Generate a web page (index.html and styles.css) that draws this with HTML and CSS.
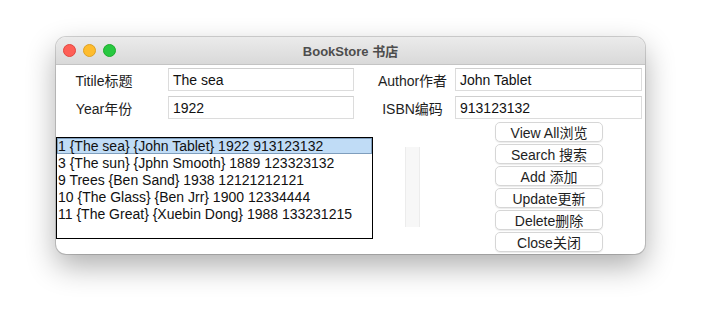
FILE: index.html
```html
<!DOCTYPE html>
<html>
<head>
<meta charset="utf-8">
<link rel="stylesheet" href="styles.css">
</head>
<body>
<div class="window">
  <div class="titlebar">
    <div class="lights">
      <span class="light red"></span>
      <span class="light yellow"></span>
      <span class="light green"></span>
    </div>
    <div class="title">BookStore 书店</div>
  </div>
  <div class="content">
    <div class="form">
      <div class="label l1">Titile标题</div>
      <div class="entry">The sea</div>
      <div class="label l2">Author作者</div>
      <div class="entry">John Tablet</div>
      <div class="label l1">Year年份</div>
      <div class="entry">1922</div>
      <div class="label l2">ISBN编码</div>
      <div class="entry">913123132</div>
    </div>
    <div class="lower">
      <div class="listbox">
        <div class="item selected">1 {The sea} {John Tablet} 1922 913123132</div>
        <div class="item">3 {The sun} {Jphn Smooth} 1889 123323132</div>
        <div class="item">9 Trees {Ben Sand} 1938 12121212121</div>
        <div class="item">10 {The Glass} {Ben Jrr} 1900 12334444</div>
        <div class="item">11 {The Great} {Xuebin Dong} 1988 133231215</div>
      </div>
      <div class="scrollbar"></div>
      <div class="buttons">
        <div class="btn">View All浏览</div>
        <div class="btn">Search 搜索</div>
        <div class="btn">Add 添加</div>
        <div class="btn">Update更新</div>
        <div class="btn">Delete删除</div>
        <div class="btn">Close关闭</div>
      </div>
    </div>
  </div>
</div>
</body>
</html>
```
FILE: styles.css
```css
html, body {
  margin: 0;
  padding: 0;
  background: #ffffff;
}
body {
  width: 701px;
  height: 328px;
  overflow: hidden;
  font-family: "Liberation Sans", "Noto Sans CJK SC", sans-serif;
  font-size: 14px;
  color: #1e1e1e;
}
.window {
  margin: 37px 0 0 56px;
  width: 589px;
  height: 217px;
  border-radius: 10px;
  background: #ffffff;
  box-shadow: 0 0 0 1px rgba(0,0,0,0.16), 0 12px 30px rgba(0,0,0,0.32);
  overflow: hidden;
  display: flex;
  flex-direction: column;
}
.titlebar {
  height: 27px;
  flex: none;
  background: linear-gradient(#ebebeb, #d9d9d9);
  border-bottom: 1px solid #c4c4c4;
  display: flex;
  align-items: center;
  position: relative;
}
.lights {
  display: flex;
  gap: 7px;
  padding-left: 7px;
}
.light {
  width: 13px;
  height: 13px;
  border-radius: 50%;
  box-sizing: border-box;
}
.red { background: #fe5f57; border: 1px solid #e2463f; }
.yellow { background: #febc2e; border: 1px solid #dea123; }
.green { background: #28c840; border: 1px solid #1dac2c; }
.title {
  position: absolute;
  left: 0;
  right: 0;
  text-align: center;
  font-weight: bold;
  color: #4d4d4d;
  font-size: 13px;
}
.content {
  flex: 1;
  display: flex;
  flex-direction: column;
}
.form {
  display: grid;
  grid-template-columns: 112px 186px 101px 187px;
  grid-auto-rows: 23px;
  row-gap: 5px;
  padding-top: 3px;
}
.label {
  display: flex;
  align-items: center;
  justify-content: center;
}
.l1 { padding-right: 16px; }
.l2 { padding-left: 16px; }
.entry {
  border: 1px solid #dcdcdc;
  border-top-color: #cfcfcf;
  box-sizing: border-box;
  padding-left: 4px;
  display: flex;
  align-items: center;
  color: #111;
}
.lower {
  display: flex;
  align-items: flex-start;
}
.listbox {
  margin-top: 18px;
  width: 317px;
  height: 102px;
  box-sizing: border-box;
  border: 1px solid #000;
}
.item {
  height: 17px;
  line-height: 16px;
  padding-left: 1px;
  box-sizing: border-box;
  color: #111;
  white-space: nowrap;
}
.selected {
  background: #c0dcf6;
  border: 1px solid #7f9ebd;
  padding-left: 0;
  height: 16px;
  line-height: 14px;
  margin-bottom: 1px;
}
.scrollbar {
  margin-top: 28px;
  margin-left: 32px;
  width: 15px;
  height: 80px;
  box-sizing: border-box;
  background: #f7f7f7;
  border-left: 1px solid #ececec;
  border-right: 1px solid #ececec;
}
.buttons {
  margin-top: 3px;
  margin-left: 75px;
  display: flex;
  flex-direction: column;
  gap: 2px;
}
.btn {
  width: 108px;
  height: 20px;
  box-sizing: border-box;
  border: 1px solid #d6d6d6;
  border-radius: 5px;
  background: #fff;
  box-shadow: 0 1px 1px rgba(0,0,0,0.08);
  display: flex;
  align-items: center;
  justify-content: center;
  color: #1e1e1e;
}
```
